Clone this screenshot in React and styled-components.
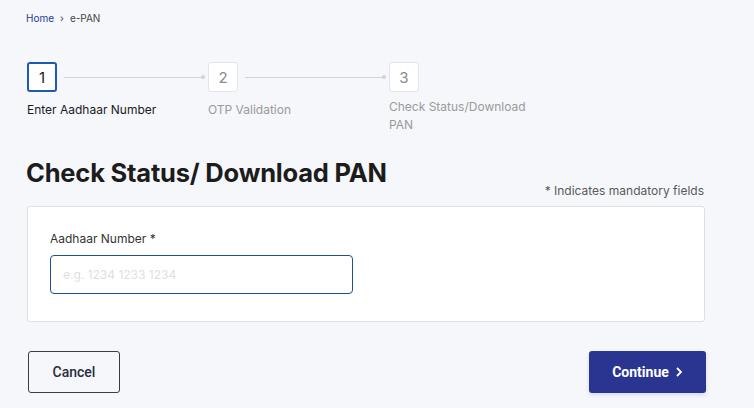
import React from 'react';
import styled, { createGlobalStyle } from 'styled-components';

const GlobalStyle = createGlobalStyle`
  html, body {
    margin: 0;
    padding: 0;
    background: #f5f7fb;
    font-family: Inter, "Noto Sans", sans-serif;
  }
  * { box-sizing: border-box; }
`;

const Page = styled.div`
  width: 754px;
  height: 408px;
  padding: 11px 48px 0 26px;
  overflow: hidden;
`;

const Breadcrumb = styled.nav`
  display: flex;
  align-items: center;
  gap: 6px;
  font-size: 10px;
  color: #444;
  height: 14px;

  a {
    color: #1f3b95;
    text-decoration: none;
  }
`;

const Stepper = styled.div`
  display: flex;
  margin-top: 37px;
  padding-left: 1px;
`;

const Step = styled.div`
  width: ${p => (p.last ? '150px' : '181px')};
  display: flex;
  flex-direction: column;
`;

const StepHead = styled.div`
  display: flex;
  align-items: center;
  height: 30px;
`;

const StepBox = styled.div`
  width: 30px;
  height: 30px;
  flex-shrink: 0;
  display: flex;
  align-items: center;
  justify-content: center;
  background: #fff;
  border: ${p => (p.active ? '2px solid #1d5bb0' : '1px solid #e3e5ea')};
  border-radius: 3px;
  font-size: 15px;
  color: ${p => (p.active ? '#1b1b1b' : '#8a8a8a')};
`;

const Connector = styled.div`
  flex: 1;
  height: 1px;
  margin: 0 4px 0 7px;
  background: #cfd3da;
  position: relative;

  &::after {
    content: '';
    position: absolute;
    right: -1px;
    top: -2px;
    width: 4px;
    height: 4px;
    border-radius: 50%;
    background: #cfd3da;
  }
`;

const StepLabel = styled.div`
  margin-top: ${p => (p.wrap ? '6px' : '9px')};
  font-size: 12px;
  line-height: 18px;
  color: ${p => (p.active ? '#1b1b1b' : '#9a9a9a')};
  padding-right: 8px;
`;

const HeaderRow = styled.div`
  display: flex;
  justify-content: space-between;
  align-items: flex-start;
  margin-top: 24px;
  padding-bottom: 8px;
`;

const Title = styled.h1`
  margin: 0;
  font-size: 25.5px;
  font-weight: 700;
  color: #1c1c1c;
  letter-spacing: -0.2px;
  line-height: 30px;
`;

const Mandatory = styled.span`
  font-size: 12px;
  line-height: 15px;
  color: #5a5a5a;
  margin-top: 25px;
  margin-right: 2px;
`;

const Card = styled.div`
  margin-left: 1px;
  margin-right: 1px;
  background: #fff;
  border: 1px solid #dcdfe4;
  border-radius: 3px;
  padding: 24px 22px 27px;
`;

const Label = styled.label`
  display: block;
  font-size: 12px;
  color: #333;
  margin-bottom: 9px;
`;

const Input = styled.input`
  width: 303px;
  height: 39px;
  border: 1px solid #1f4f8f;
  border-radius: 4px;
  padding: 0 12px;
  font-size: 12px;
  font-family: inherit;
  outline: none;
  background: #fff;

  &::placeholder {
    color: #dcdfe4;
  }
`;

const Actions = styled.div`
  display: flex;
  justify-content: space-between;
  margin-top: 29px;
  padding-left: 2px;
`;

const Button = styled.button`
  height: 42px;
  padding: 0 ${p => (p.primary ? '21px' : '23px')};
  min-width: ${p => (p.primary ? '117px' : '92px')};
  border-radius: 3px;
  font-family: Roboto, sans-serif;
  font-size: 14px;
  font-weight: ${p => (p.primary ? 700 : 500)};
  display: flex;
  align-items: center;
  justify-content: center;
  gap: 6px;
  cursor: pointer;
  border: ${p => (p.primary ? 'none' : '1px solid #3a3a4a')};
  background: ${p => (p.primary ? '#293591' : 'transparent')};
  color: ${p => (p.primary ? '#fff' : '#2b2b3b')};
  box-shadow: ${p => (p.primary ? '0 2px 4px rgba(41,53,145,0.15)' : 'none')};
`;

export default function App() {
  return (
    <>
      <GlobalStyle />
      <Page>
        <Breadcrumb>
          <a href="#">Home</a>
          <span>›</span>
          <span>e-PAN</span>
        </Breadcrumb>

        <Stepper>
          <Step>
            <StepHead>
              <StepBox active>1</StepBox>
              <Connector />
            </StepHead>
            <StepLabel active>Enter Aadhaar Number</StepLabel>
          </Step>
          <Step>
            <StepHead>
              <StepBox>2</StepBox>
              <Connector />
            </StepHead>
            <StepLabel>OTP Validation</StepLabel>
          </Step>
          <Step last>
            <StepHead>
              <StepBox>3</StepBox>
            </StepHead>
            <StepLabel wrap>Check Status/Download PAN</StepLabel>
          </Step>
        </Stepper>

        <HeaderRow>
          <Title>Check Status/ Download PAN</Title>
          <Mandatory>* Indicates mandatory fields</Mandatory>
        </HeaderRow>

        <Card>
          <Label>Aadhaar Number *</Label>
          <Input placeholder="e.g. 1234 1233 1234" />
        </Card>

        <Actions>
          <Button>Cancel</Button>
          <Button primary>
            Continue
            <svg width="8" height="10" viewBox="0 0 8 10">
              <path d="M2 1l4 4-4 4" fill="none" stroke="#fff" strokeWidth="1.8" />
            </svg>
          </Button>
        </Actions>
      </Page>
    </>
  );
}
